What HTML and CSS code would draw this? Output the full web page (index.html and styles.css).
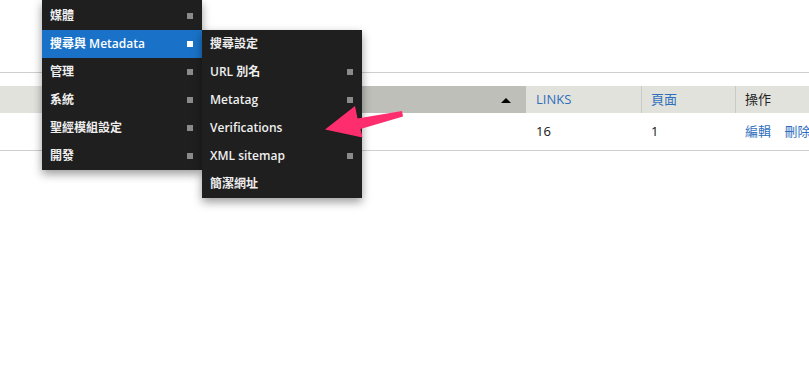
FILE: index.html
```html
<!doctype html>
<html lang="zh-Hant">
<head>
    <meta charset="UTF-8">
    <meta name="viewport" content="width=device-width, initial-scale=1.0">
    <title>Simple sitemap</title>
    <link rel="stylesheet" href="styles.css">
</head>
<body>
<div class="page">
    <div class="region">
        <div class="data-table">
            <div class="data-table__head">
                <div class="data-table__th"></div>
                <div class="data-table__th data-table__th--sorted"><span class="sort-icon"></span></div>
                <div class="data-table__th"><a href="#">LINKS</a></div>
                <div class="data-table__th data-table__th--sep"><a href="#">頁面</a></div>
                <div class="data-table__th data-table__th--sep">操作</div>
            </div>
            <div class="data-table__row">
                <div class="data-table__td"></div>
                <div class="data-table__td"></div>
                <div class="data-table__td">16</div>
                <div class="data-table__td">1</div>
                <div class="data-table__td">
                    <a class="op-link" href="#">編輯</a>
                    <a class="op-link" href="#">刪除</a>
                </div>
            </div>
        </div>
    </div>
</div>

<nav class="menu">
    <ul class="menu__list">
        <li class="menu__item menu__item--parent">媒體</li>
        <li class="menu__item menu__item--parent menu__item--active">搜尋與 Metadata
            <ul class="menu__list menu__list--sub">
                <li class="menu__item">搜尋設定</li>
                <li class="menu__item menu__item--parent">URL 別名</li>
                <li class="menu__item menu__item--parent">Metatag</li>
                <li class="menu__item">Verifications</li>
                <li class="menu__item menu__item--parent">XML sitemap</li>
                <li class="menu__item">簡潔網址</li>
            </ul>
        </li>
        <li class="menu__item menu__item--parent">管理</li>
        <li class="menu__item menu__item--parent">系統</li>
        <li class="menu__item menu__item--parent">聖經模組設定</li>
        <li class="menu__item menu__item--parent">開發</li>
    </ul>
</nav>

<svg class="pointer" width="90" height="45" viewBox="0 0 90 45">
    <polygon points="5,29.5 35,6 37.5,18.5 82,11 83,16.5 40.5,29 42.5,37.5" fill="#fe2d6d"/>
</svg>
</body>
</html>
```

FILE: styles.css
```css
body {
    margin: 0;
    width: 809px;
    height: 389px;
    overflow: hidden;
    position: relative;
    background: #fff;
    font-family: "Open Sans", "Noto Sans CJK TC", sans-serif;
    font-size: 13px;
    color: #222;
}

a {
    color: #2f6fbd;
    text-decoration: none;
}

.page {
    padding-top: 72px;
}

.region {
    border-top: 1px solid #cfcfcf;
    padding-top: 13px;
}

.data-table {
    width: 840px;
}

.data-table__head,
.data-table__row {
    display: grid;
    grid-template-columns: 150px 376px 115px 94px 1fr;
}

.data-table__head {
    background: #e1e2dc;
}

.data-table__th {
    height: 27px;
    line-height: 27px;
    padding: 0 10px;
    box-sizing: border-box;
}

.data-table__th--sorted {
    background: #bebfb9;
    display: flex;
    align-items: center;
    justify-content: flex-end;
    padding-right: 15px;
}

.data-table__th--sep {
    border-left: 1px solid #c9cac4;
    padding-left: 9px;
}

.sort-icon {
    width: 0;
    height: 0;
    margin-top: 2px;
    border-left: 5.5px solid transparent;
    border-right: 5.5px solid transparent;
    border-bottom: 5px solid #000;
}

.data-table__row {
    border-bottom: 1px solid #cfcfcf;
}

.data-table__td {
    height: 37px;
    line-height: 37px;
    padding: 0 10px;
    box-sizing: border-box;
    color: #111;
}

.op-link {
    margin-right: 10px;
}

.menu {
    position: absolute;
    left: 42px;
    top: 0;
    width: 160px;
    font-weight: 600;
    font-size: 12px;
    color: #efefef;
}

.menu__list {
    list-style: none;
    margin: 0;
    padding: 0;
    background: #1f1f1f;
    box-shadow: 0 4px 9px rgba(0, 0, 0, 0.4);
}

.menu > .menu__list {
    padding-top: 2px;
}

.menu__list--sub {
    position: absolute;
    left: 100%;
    top: 0;
    width: 160px;
}

.menu__item {
    position: relative;
    height: 28px;
    line-height: 28px;
    padding: 0 8px;
    white-space: nowrap;
}

.menu__item--parent::after {
    content: "";
    position: absolute;
    right: 9px;
    top: 11px;
    width: 6px;
    height: 6px;
    background: #8a8a8a;
}

.menu__item--active {
    background: #1a72c8;
    color: #fff;
}

.menu__item--active::after {
    background: #fff;
}

.menu__item--active .menu__item {
    color: #efefef;
}

.pointer {
    position: absolute;
    left: 320px;
    top: 100px;
}
```
